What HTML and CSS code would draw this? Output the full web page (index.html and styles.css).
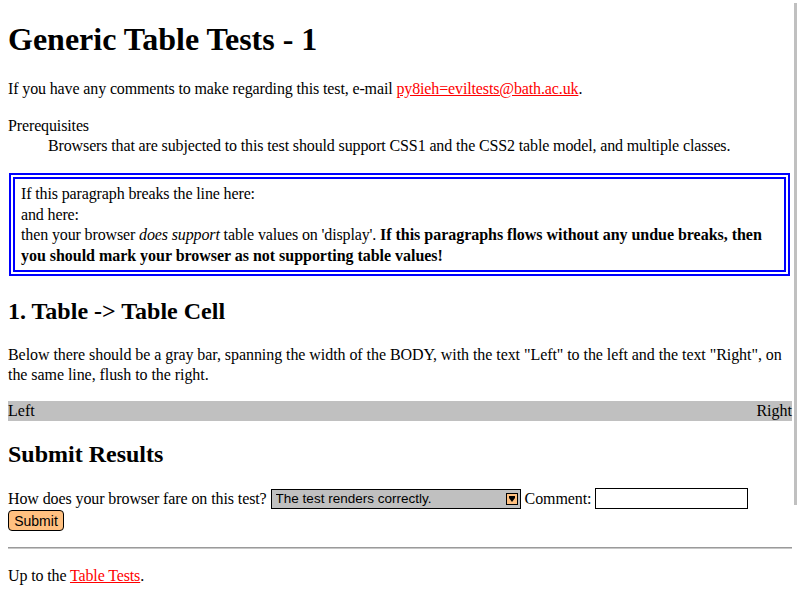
FILE: index.html
```html
<!DOCTYPE html>
<html>
<head>
<meta charset="utf-8">
<title>Generic Table Tests - 1</title>
<link rel="stylesheet" href="styles.css">
</head>
<body>
<h1 class="title">Generic Table Tests - 1</h1>
<p class="intro">If you have any comments to make regarding this test, e-mail <a class="link" href="#">py8ieh=eviltests@bath.ac.uk</a>.</p>
<dl class="prereq">
  <dt>Prerequisites</dt>
  <dd>Browsers that are subjected to this test should support CSS1 and the CSS2 table model, and multiple classes.</dd>
</dl>
<div class="testbox">
  <div class="row">If this paragraph breaks the line here:</div>
  <div class="row">and here:</div>
  <div class="row">then your browser <em>does support</em> table values on 'display'. <strong class="verdict">If this paragraphs flows without any undue breaks, then you should mark your browser as not supporting table values!</strong></div>
</div>
<h2 class="section sec1">1. Table -&gt; Table Cell</h2>
<p class="desc">Below there should be a gray bar, spanning the width of the BODY, with the text "Left" to the left and the text "Right", on the same line, flush to the right.</p>
<div class="graybar"><span>Left</span><span>Right</span></div>
<h2 class="section sec2">Submit Results</h2>
<form class="results">
  <div class="formline">
    <span>How does your browser fare on this test?</span>
    <span class="selectwrap"><select class="choice"><option>The test renders correctly.</option></select><svg class="arrow" width="12" height="12" viewBox="0 0 12 12"><rect x="0.5" y="0.5" width="11" height="11" fill="#ffc080" stroke="#000"/><path d="M3 3H9V5L6 9L3 5Z" fill="#000"/></svg></span>
    <span>Comment:</span>
    <input class="comment" type="text">
  </div>
  <button class="submit" type="button">Submit</button>
</form>
<hr class="rule">
<p class="footer">Up to the <a class="link" href="#">Table Tests</a>.</p>
<div class="thumb"></div>
</body>
</html>
```

FILE: styles.css
```css
html { background: #fff; }
body {
  margin: 0;
  padding: 8px;
  font-family: "Liberation Serif", "Times New Roman", serif;
  font-size: 16px;
  line-height: 20px;
  letter-spacing: -0.13px;
  color: #000;
}
.title {
  font-size: 32px;
  line-height: 37px;
  letter-spacing: 0;
  margin: 13px 0 0;
}
.intro { margin: 21px 0 0; }
.link { color: #f00; text-decoration: underline; }
.prereq { margin: 17px 0 0; }
.prereq dd { margin-left: 40px; }
.testbox {
  margin: 17px 2px 0 1px;
  border: 6px double #00f;
  padding: 5px 6px 4px;
  line-height: 20.5px;
}
.verdict { letter-spacing: -0.03px; }
.section {
  font-size: 24px;
  line-height: 28px;
  letter-spacing: 0;
}
.sec1 { margin: 21px 0 0; }
.sec2 { margin: 19px 0 0; }
.desc { margin: 20px 0 0; letter-spacing: -0.06px; }
.graybar {
  display: flex;
  justify-content: space-between;
  background: #c0c0c0;
  margin-top: 16px;
  letter-spacing: 0;
}
.results { margin: 20px 0 0; }
.formline {
  display: flex;
  align-items: center;
  gap: 4px;
  height: 21px;
  letter-spacing: -0.1px;
}
.selectwrap { position: relative; display: block; height: 20px; }
.choice {
  -webkit-appearance: none;
  appearance: none;
  display: block;
  width: 250px;
  height: 20px;
  background: #c0c0c0;
  border: 1px solid #000;
  border-radius: 0;
  font-family: "Liberation Sans", Arial, sans-serif;
  font-size: 13.5px;
  letter-spacing: 0;
  color: #000;
  padding: 0 0 0 4px;
  margin: 0;
}
.arrow { position: absolute; right: 3px; top: 4px; }
.comment {
  width: 153px;
  height: 21px;
  box-sizing: border-box;
  border: 1px solid #000;
  padding: 1px 2px;
  margin: 0;
  font-family: "Liberation Sans", Arial, sans-serif;
  font-size: 13.33px;
}
.submit {
  display: block;
  width: 56px;
  height: 21px;
  margin: 1px 0 0;
  padding: 0;
  background: #ffc080;
  border: 1px solid #000;
  border-radius: 4px;
  font-family: "Liberation Sans", Arial, sans-serif;
  font-size: 14px;
  color: #000;
}
.rule {
  margin: 16px 0 0;
  border: 0;
  border-top: 1px solid #9a9a9a;
  border-bottom: 1px solid #c8c8c8;
  height: 0;
}
.footer { margin: 17px 0 0; }
.thumb {
  position: fixed;
  left: 794px;
  top: 3px;
  width: 3px;
  height: 502px;
  background: #c0c0c0;
}
```
